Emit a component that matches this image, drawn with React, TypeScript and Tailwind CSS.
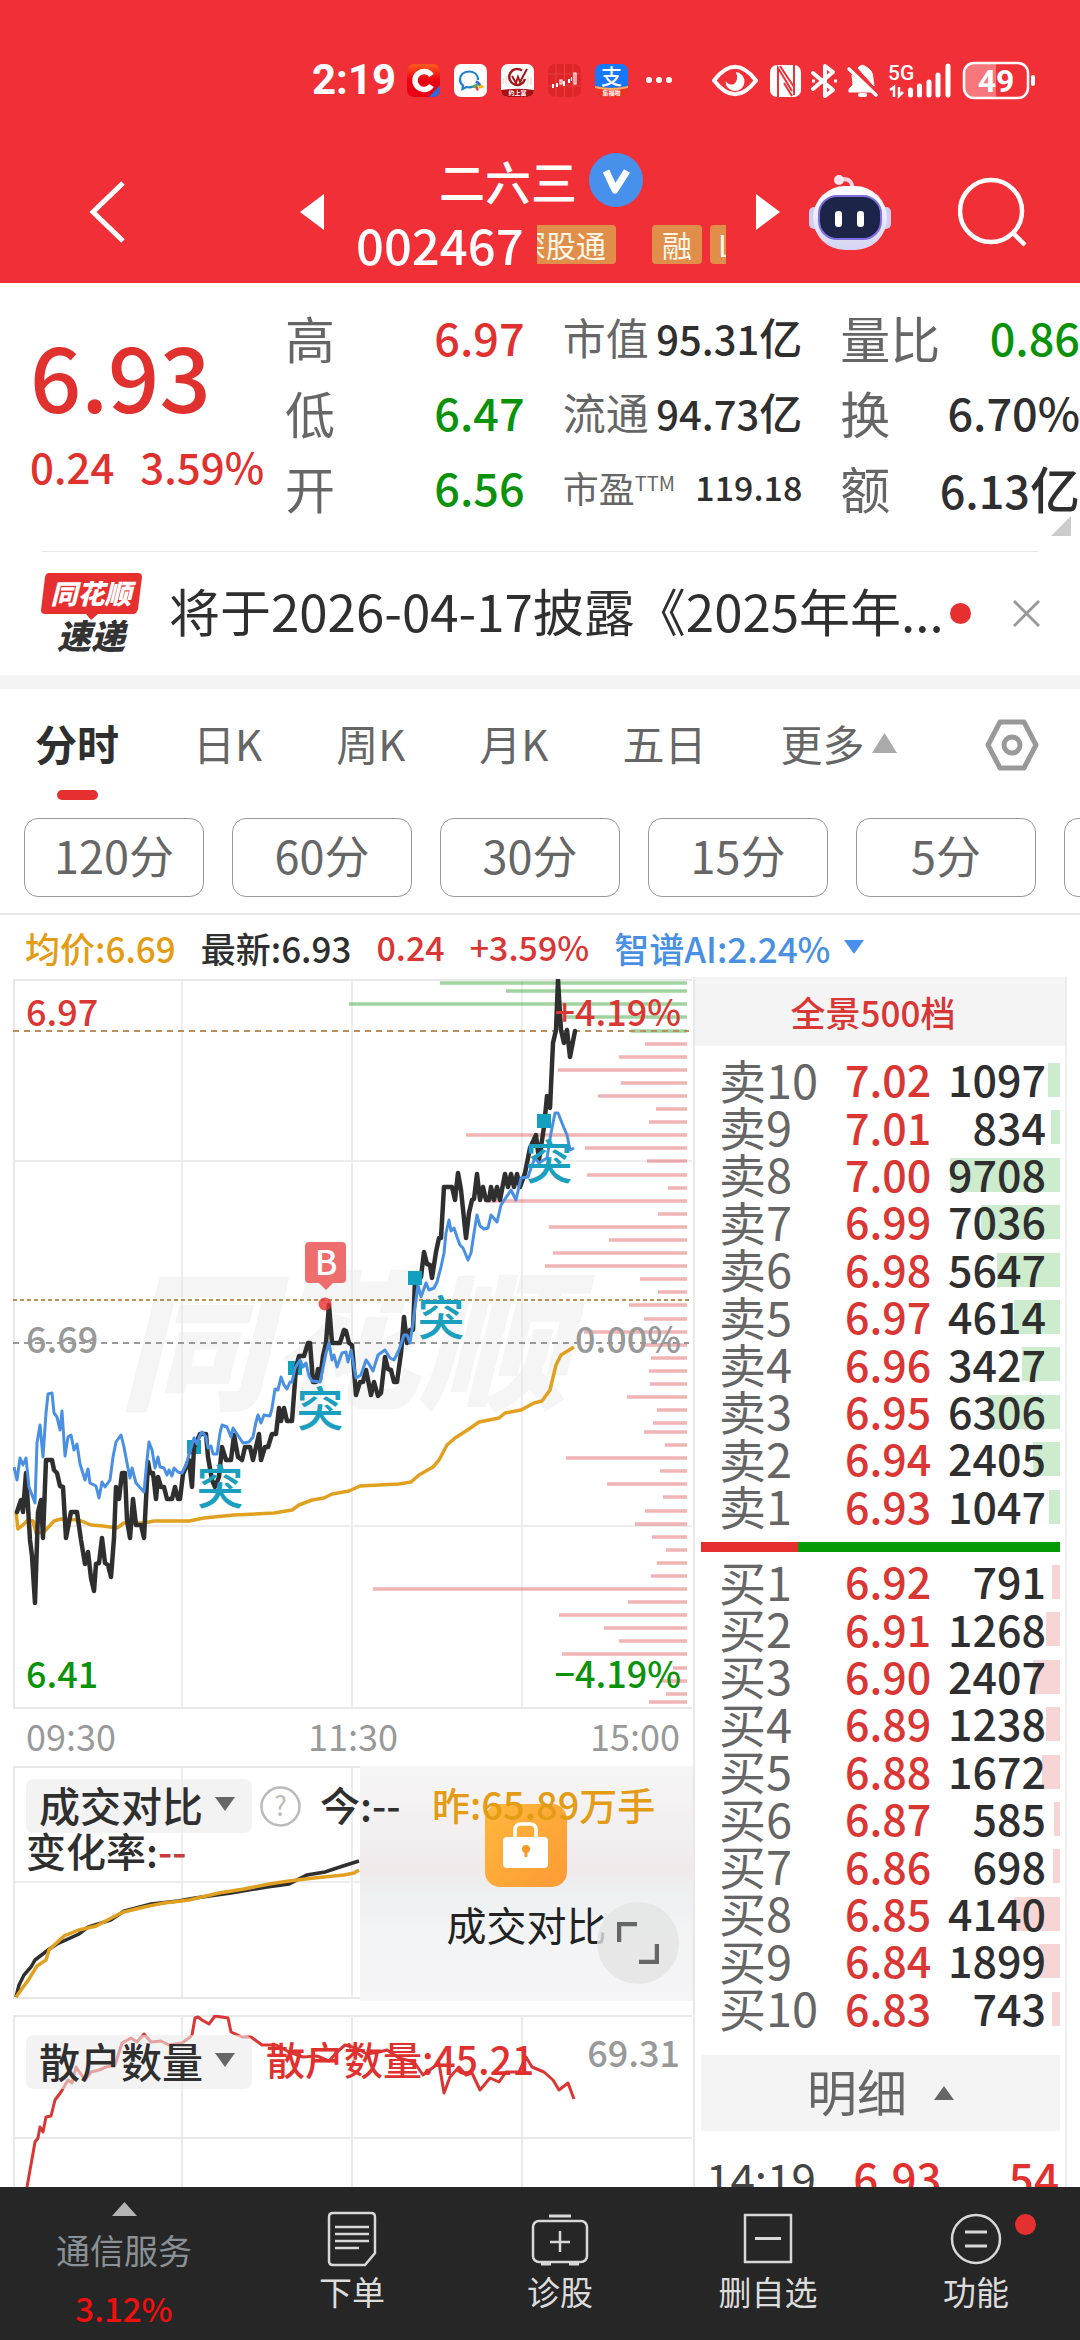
import React from "react";

type Level = { label: string; price: string; volume: string; bar: number };

const sells: Level[] = [
  { label: "卖10", price: "7.02", volume: "1097", bar: 12 },
  { label: "卖9", price: "7.01", volume: "834", bar: 9 },
  { label: "卖8", price: "7.00", volume: "9708", bar: 110 },
  { label: "卖7", price: "6.99", volume: "7036", bar: 79 },
  { label: "卖6", price: "6.98", volume: "5647", bar: 63 },
  { label: "卖5", price: "6.97", volume: "4614", bar: 46 },
  { label: "卖4", price: "6.96", volume: "3427", bar: 38 },
  { label: "卖3", price: "6.95", volume: "6306", bar: 71 },
  { label: "卖2", price: "6.94", volume: "2405", bar: 27 },
  { label: "卖1", price: "6.93", volume: "1047", bar: 11 },
];

const buys: Level[] = [
  { label: "买1", price: "6.92", volume: "791", bar: 8 },
  { label: "买2", price: "6.91", volume: "1268", bar: 14 },
  { label: "买3", price: "6.90", volume: "2407", bar: 27 },
  { label: "买4", price: "6.89", volume: "1238", bar: 14 },
  { label: "买5", price: "6.88", volume: "1672", bar: 18 },
  { label: "买6", price: "6.87", volume: "585", bar: 6 },
  { label: "买7", price: "6.86", volume: "698", bar: 7 },
  { label: "买8", price: "6.85", volume: "4140", bar: 46 },
  { label: "买9", price: "6.84", volume: "1899", bar: 21 },
  { label: "买10", price: "6.83", volume: "743", bar: 8 },
];

const priceLine =
  "18,1512 22,1500 24,1512 27,1473 31,1540 33,1556 36,1603 39,1512 42,1500 44,1538 47,1460 53,1460 55,1470 58,1473 61,1486 64,1487 67,1538 72,1512 78,1512 82,1540 86,1564 89,1552 92,1578 95,1591 97,1564 100,1563 103,1538 106,1563 109,1565 112,1577 115,1538 117,1487 120,1499 123,1473 126,1473 128,1520 131,1538 134,1499 137,1525 142,1525 145,1538 149,1462 151,1473 154,1473 157,1499 159,1477 162,1487 165,1487 168,1499 173,1499 176,1487 179,1499 181,1499 184,1474 190,1460 193,1487 195,1447 201,1434 207,1434 209,1457 213,1480 216,1487 220,1477 223,1447 227,1460 232,1460 235,1435 239,1457 243,1460 246,1447 251,1447 254,1460 260,1434 262,1460 266,1447 269,1447 273,1434 277,1434 280,1408 282,1421 285,1408 288,1421 293,1421 297,1368 300,1356 305,1356 309,1343 311,1343 314,1382 317,1382 319,1369 321,1380 324,1356 327,1343 330,1305 333,1343 341,1343 345,1330 347,1331 350,1343 353,1345 357,1395 361,1382 364,1382 367,1370 372,1395 375,1382 379,1396 382,1393 386,1357 389,1369 392,1370 395,1382 398,1382 402,1353 405,1317 408,1343 411,1330 414,1330 416,1280 422,1277 425,1252 428,1264 431,1265 433,1278 437,1252 440,1238 442,1238 445,1187 453,1187 456,1200 459,1173 462,1190 467,1238 470,1213 473,1200 475,1199 478,1174 481,1200 484,1187 487,1200 490,1200 492,1187 495,1200 498,1187 501,1200 506,1174 509,1187 512,1174 515,1187 518,1174 521,1187 526,1173 531,1148 537,1135 540,1160 545,1127 548,1096 551,1108 554,1043 557,1030 559,980 562,1030 565,1043 568,1030 571,1057 576,1031";

const themeLine =
  "15,1467 18,1480 21,1458 24,1465 27,1458 30,1487 36,1503 38,1443 41,1425 44,1457 47,1413 49,1394 53,1393 55,1413 58,1417 61,1430 63,1411 66,1456 69,1437 72,1435 75,1450 78,1444 81,1464 86,1480 89,1469 91,1483 97,1486 100,1498 103,1482 106,1487 111,1480 114,1457 117,1442 122,1435 125,1447 128,1463 131,1478 133,1468 137,1483 145,1492 148,1460 150,1442 153,1450 156,1468 159,1457 161,1467 165,1468 168,1475 170,1470 173,1476 175,1468 179,1472 183,1473 187,1465 195,1438 198,1444 201,1435 203,1432 207,1437 209,1448 212,1446 214,1454 218,1454 221,1433 223,1425 228,1427 232,1437 234,1428 240,1437 244,1443 250,1442 254,1437 257,1422 259,1415 262,1423 265,1415 271,1416 273,1408 276,1389 279,1390 282,1377 285,1385 288,1389 291,1382 293,1382 296,1368 301,1360 304,1367 307,1363 310,1376 313,1381 321,1382 324,1368 327,1353 330,1343 333,1360 335,1355 338,1367 343,1353 347,1352 349,1362 352,1350 357,1378 362,1375 367,1360 370,1364 374,1371 379,1355 386,1350 391,1358 395,1360 400,1350 405,1335 408,1335 411,1343 414,1323 419,1285 422,1297 427,1283 430,1290 435,1288 438,1282 442,1267 445,1253 447,1233 450,1220 452,1231 455,1228 458,1237 461,1245 464,1248 469,1260 472,1253 475,1233 478,1215 481,1226 485,1229 489,1228 492,1215 498,1222 502,1205 512,1190 517,1200 522,1178 529,1177 532,1168 536,1158 540,1163 548,1158 552,1133 556,1113 559,1113 565,1128 568,1135 571,1150 575,1148";

const averageLine =
  "17,1512 19,1529 24,1525 29,1520 34,1521 37,1533 45,1532 55,1521 62,1519 80,1520 92,1525 104,1526 118,1528 125,1523 145,1523 155,1521 190,1521 205,1518 235,1515 275,1513 293,1510 300,1505 313,1500 325,1498 333,1494 350,1491 361,1486 380,1485 400,1484 412,1482 420,1475 434,1467 440,1460 448,1445 456,1438 470,1429 480,1422 500,1418 506,1413 522,1410 535,1403 543,1401 551,1390 557,1365 562,1355 575,1347";

const volumeToday =
  "17,1997 20,1985 25,1975 32,1967 36,1960 49,1950 58,1944 80,1934 89,1927 112,1920 125,1911 152,1904 179,1901 196,1898 232,1893 268,1887 290,1884 308,1875 326,1872 344,1866 360,1861";

const volumeYesterday =
  "17,1997 30,1979 38,1966 47,1960 50,1950 65,1936 80,1930 97,1926 120,1914 125,1912 145,1907 165,1903 190,1900 220,1893 245,1889 270,1884 290,1881 315,1878 345,1875 355,1873 360,1870";

const retailLine =
  "28,2187 36,2142 39,2138 41,2127 44,2132 47,2117 52,2116 56,2100 62,2092 69,2080 73,2083 77,2067 86,2080 92,2072 100,2070 107,2067 116,2065 123,2043 132,2038 138,2042 145,2034 152,2042 162,2041 170,2045 183,2043 190,2038 193,2035 196,2018 199,2017 203,2020 210,2024 216,2016 229,2018 232,2032 243,2037 252,2037 263,2045 277,2045 290,2052 304,2057 318,2056 330,2061 338,2052 346,2045 357,2048 368,2054 380,2052 388,2050 400,2058 415,2062 424,2075 440,2063 445,2093 451,2077 460,2067 467,2075 473,2073 481,2090 491,2078 500,2082 507,2072 520,2072 527,2057 533,2067 545,2072 554,2080 560,2090 569,2083 575,2099";

const greenBars = [[441, 983], [507, 991], [350, 1004], [567, 1017], [632, 1031]];

const redBars = [
  [646, 1044], [620, 1057], [559, 1070], [622, 1083], [599, 1096], [657, 1109], [650, 1122], [467, 1135],
  [586, 1148], [648, 1161], [588, 1175], [669, 1188], [487, 1201], [659, 1214], [550, 1227], [610, 1240],
  [554, 1253], [546, 1266], [641, 1279], [659, 1292], [630, 1305], [645, 1319], [585, 1332], [645, 1345],
  [652, 1358], [650, 1371], [651, 1384], [628, 1397], [658, 1410], [654, 1423], [645, 1432], [666, 1445],
  [567, 1458], [661, 1471], [608, 1484], [664, 1497], [646, 1511], [636, 1524], [653, 1537], [667, 1550],
  [658, 1563], [652, 1576], [374, 1589], [629, 1602], [560, 1615], [605, 1628], [620, 1641], [563, 1654],
  [674, 1668], [661, 1681], [667, 1694], [650, 1702],
];

const breakouts = [
  { x: 195, y: 1447, tx: 221, ty: 1504 },
  { x: 296, y: 1368, tx: 321, ty: 1426 },
  { x: 416, y: 1278, tx: 442, ty: 1335 },
  { x: 545, y: 1121, tx: 550, ty: 1179 },
];

function StatusBar() {
  return (
    <div className="flex h-[160px] items-center pl-[312px] pr-[44px] text-white">
      <span className="w-[95px] text-[42px] font-bold leading-none font-['Roboto',sans-serif]">2:19</span>
      <div className="flex gap-[14px]">
        <svg className="size-[33px]" viewBox="0 0 33 33" aria-hidden="true">
          <defs>
            <linearGradient id="cg" x1="0" y1="0" x2="0" y2="1">
              <stop offset="0" stopColor="#ff5a1f" />
              <stop offset=".5" stopColor="#e60012" />
            </linearGradient>
          </defs>
          <rect width="33" height="33" rx="7" fill="url(#cg)" />
          <path d="M22 33 L33 21 V26 Q33 33 26 33Z" fill="#2f6be0" />
          <path d="M24.500 11.500 A9 9 0 1 0 24.500 21.500" fill="none" stroke="#fff" strokeWidth="5.500" />
        </svg>
        <svg className="size-[33px]" viewBox="0 0 33 33" aria-hidden="true">
          <rect width="33" height="33" rx="7" fill="#fff" />
          <path d="M24 16 C24 10 19.500 7.500 15 7.500 C9.500 7.500 6 11 6 15.500 C6 18.500 7.500 20.500 9 21.500 L8.500 25 L12.500 23 C15 23.500 17 23.500 19 22.500" fill="none" stroke="#1e7fd6" strokeWidth="2.200" />
          <path d="M23 18 l2.500 2.500" stroke="#2f6be0" strokeWidth="3" strokeLinecap="round" />
          <path d="M20 22.500 l2.500 -1" stroke="#4caf50" strokeWidth="3" strokeLinecap="round" />
          <path d="M23.500 25.500 l-1 -2" stroke="#f44336" strokeWidth="2.500" strokeLinecap="round" />
          <path d="M26 23 l2 -.5" stroke="#ffb300" strokeWidth="3" strokeLinecap="round" />
        </svg>
        <svg className="size-[33px]" viewBox="0 0 33 33" aria-hidden="true">
          <rect width="33" height="33" rx="7" fill="#fff" />
          <path d="M2 20V14M5 21V12M27 20V12M30 21V13" stroke="#f6c9c9" />
          <path d="M21 6.500 A8 8 0 1 0 24 15" fill="none" stroke="#a3181b" strokeWidth="2.500" />
          <path d="M11 12 L15 19 L17 13 L19 18 L26 5" fill="none" stroke="#a3181b" strokeWidth="2" />
          <path d="M0 26 Q16 23.500 33 26 Q33 33 26 33 H7 Q0 33 0 26Z" fill="#a80f12" />
          <text x="16.500" y="31" textAnchor="middle" fontSize="6" fontWeight="700" fill="#fff">约上富</text>
        </svg>
        <svg className="size-[33px]" viewBox="0 0 33 33" aria-hidden="true">
          <rect width="33" height="33" rx="7" fill="#df2528" />
          <path d="M8 0V33M16.500 0V33M25 0V33M0 10H33M0 22H33" stroke="#ea4a4a" strokeWidth=".7" />
          <path d="M5 20v4M9 19v4M16 17v5M21 15v4" stroke="#fff" strokeWidth="2" />
          <path d="M12 16h2v4h-2zM26 9h2v11h-2zM23.500 13v4" fill="none" stroke="#fff" strokeWidth="1.200" />
        </svg>
        <svg className="size-[33px]" viewBox="0 0 33 33" aria-hidden="true">
          <rect width="33" height="33" rx="7" fill="#1677ff" />
          <path d="M0 22 Q16 26 33 22 V26 Q33 33 26 33 H7 Q0 33 0 26Z" fill="#f0321e" />
          <path d="M0 22 Q16 26 33 22 V24 Q16 28 0 24Z" fill="#ffb168" />
          <text x="16.500" y="20" textAnchor="middle" fontSize="21" fontWeight="500" fill="#fff">支</text>
          <text x="16.500" y="31" textAnchor="middle" fontSize="6" fontWeight="700" fill="#fff">集福啦</text>
        </svg>
      </div>
      <svg className="ml-[16px] h-[8px] w-[30px]" viewBox="0 0 30 8" fill="#fff" aria-hidden="true">
        <circle cx="5" cy="4" r="3" />
        <circle cx="15" cy="4" r="3" />
        <circle cx="25" cy="4" r="3" />
      </svg>
      <svg className="ml-auto h-[40px] w-[324px]" viewBox="712 60 324 40" fill="none" stroke="#fff" aria-hidden="true">
        <path d="M714 80.500 Q735 53 756 80.500 Q735 108 714 80.500Z" strokeWidth="4" strokeLinejoin="round" />
        <path d="M736 72 A9.500 9.500 0 1 1 725.500 81 Q729 86 734 84 Q739 80 736 72Z" fill="#fff" stroke="none" />
        <rect x="770" y="65" width="31" height="32" rx="7" fill="#fff" stroke="none" />
        <path d="M778 97 V68 L792 91 M780 66 L794 87 M794 65 V95 M784 83 L792 96" stroke="#f12f37" strokeWidth="2" />
        <path d="M813 73 L833 90 L825 96 V66 L833 72 L813 89" strokeWidth="4" strokeLinejoin="round" strokeLinecap="round" />
        <path d="M812 81h3M834 81h3" strokeWidth="3" />
        <path d="M852 75 L872 92 H849 V89 L853 85Z M858 68 Q862 63 866 67 Q873 70 873 79 L874 86Z" fill="#fff" strokeWidth="1" />
        <path d="M849 69 L876 95" strokeWidth="3.500" strokeLinecap="round" />
        <path d="M860 95h5" strokeWidth="4" strokeLinecap="round" />
        <text x="888" y="80" fontSize="21" fontWeight="500" fill="#fff" stroke="none" className="font-['Roboto',sans-serif]">5G</text>
        <path d="M890 90 L894 87 V97 M899 87 V96 L903 92" strokeWidth="2.500" />
        <path d="M910.500 90V95M919.500 86V95M929 82V95M938 75V95M948 66V95" strokeWidth="5" strokeLinecap="round" />
        <path d="M996 64H975Q965 64 965 74V88Q965 97 975 97H996Z" fill="#fff" fillOpacity=".35" stroke="none" />
        <rect x="964" y="63" width="64" height="35" rx="10" strokeWidth="2.500" />
        <path d="M1033 77V84" strokeWidth="4" strokeLinecap="round" />
        <text x="996" y="92" textAnchor="middle" fontSize="32" fontWeight="700" fill="#fff" stroke="none" className="font-['Roboto',sans-serif]">49</text>
      </svg>
    </div>
  );
}

function Header() {
  return (
    <header className="h-[283px] shrink-0 bg-[#f12f37] text-white">
      <StatusBar />
      <div className="-mt-[8px] flex h-[120px] items-center pl-[88px] pr-[52px]">
        <button type="button" aria-label="返回" className="w-[40px]">
          <svg className="h-[62px] w-[38px]" viewBox="0 0 38 62" fill="none" stroke="#fff" strokeWidth="5">
            <path d="M35 2 L5 31 L35 60" />
          </svg>
        </button>
        <div className="ml-auto mr-[28px] flex items-center">
          <button type="button" aria-label="上一只" className="mr-[32px]">
            <svg className="h-[36px] w-[24px]" viewBox="0 0 24 36"><path d="M24 0V36L0 18Z" fill="#fff" /></svg>
          </button>
          <div className="flex w-[370px] flex-col">
            <h1 className="flex items-center justify-center gap-[12px] text-[46px] font-medium leading-[60px]">
              二六三
              <svg className="size-[54px]" viewBox="0 0 54 54" aria-hidden="true">
                <circle cx="27" cy="27" r="27" fill="#4791ed" />
                <path d="M17 18 L26 37 L38 18" fill="none" stroke="#fff" strokeWidth="7" strokeLinejoin="round" />
              </svg>
            </h1>
            <div className="mt-[4px] flex h-[60px] items-center gap-[13px]">
              <span className="text-[49px] font-medium leading-[60px]">002467</span>
              <div className="flex h-[39px] w-[190px] justify-end overflow-hidden text-[30px] leading-[38px] text-[#fff8e8]">
                <div className="-mr-[33px] flex shrink-0">
                  <span className="mr-[36px] rounded-[4px] bg-[#e28e4b] px-[10px]">深股通</span>
                  <span className="mr-[8px] rounded-[4px] bg-[#e28e4b] px-[10px]">融</span>
                  <span className="rounded-[4px] bg-[#e28e4b] px-[8px]">L1</span>
                </div>
              </div>
            </div>
          </div>
          <button type="button" aria-label="下一只" className="ml-[30px]">
            <svg className="h-[36px] w-[24px]" viewBox="0 0 24 36"><path d="M0 0V36L24 18Z" fill="#fff" /></svg>
          </button>
        </div>
        <button type="button" aria-label="智能助手" className="mr-[66px]">
          <svg className="h-[78px] w-[84px]" viewBox="0 0 84 78">
            <defs>
              <linearGradient id="head" x1="0" y1="0" x2="0" y2="1">
                <stop offset="0" stopColor="#fff" />
                <stop offset="1" stopColor="#d4d4f2" />
              </linearGradient>
            </defs>
            <path d="M44 18 Q46 5 33 6" fill="none" stroke="#f5d5e4" strokeWidth="4" />
            <circle cx="31" cy="7" r="5" fill="#fbe6ee" />
            <rect x="1" y="34" width="12" height="22" rx="5" fill="#cfcdf0" />
            <rect x="71" y="34" width="12" height="22" rx="5" fill="#cfcdf0" />
            <rect x="5" y="13" width="74" height="64" rx="32" fill="url(#head)" />
            <rect x="11" y="23" width="62" height="43" rx="18" fill="#1c2547" stroke="#7f6fe0" strokeWidth="2" />
            <rect x="27" y="38" width="7" height="16" rx="3" fill="#fff" />
            <rect x="49" y="38" width="7" height="16" rx="3" fill="#fff" />
          </svg>
        </button>
        <button type="button" aria-label="搜索">
          <svg className="h-[70px] w-[70px]" viewBox="0 0 70 70" fill="none" stroke="#fff" strokeWidth="4.500">
            <circle cx="33" cy="34" r="31" />
            <path d="M55 56 L67 68" />
          </svg>
        </button>
      </div>
    </header>
  );
}

type StatProps = {
  label: React.ReactNode;
  value: string;
  unit?: string;
  tone: string;
  labelSize: string;
  valueSize: string;
};

function Stat({ label, value, unit, tone, labelSize, valueSize }: StatProps) {
  return (
    <div className="flex h-[75px] items-center justify-between whitespace-nowrap">
      <dt className={labelSize + " text-[#666]"}>{label}</dt>
      <dd className={valueSize + " font-medium " + tone}>
        {value}
        {unit && <span className={labelSize}>{unit}</span>}
      </dd>
    </div>
  );
}

function Quote() {
  const red = "text-[#e0312f]";
  const green = "text-[#0a930a]";
  const dark = "text-[#2f2f2f]";
  return (
    <section className="relative grid h-[268px] shrink-0 grid-cols-[217px_1fr_1fr_1fr] gap-x-[38px] pl-[30px] pt-[16px] leading-none">
      <div className={"flex flex-col whitespace-nowrap font-medium " + red}>
        <strong className="mt-[30px] text-[90px] font-medium">6.93</strong>
        <span className="mt-[26px] text-[42px]">
          0.24<span className="ml-[26px]">3.59%</span>
        </span>
      </div>
      <dl>
        <Stat label="高" value="6.97" tone={red} labelSize="text-[50px]" valueSize="text-[45px]" />
        <Stat label="低" value="6.47" tone={green} labelSize="text-[50px]" valueSize="text-[45px]" />
        <Stat label="开" value="6.56" tone={green} labelSize="text-[50px]" valueSize="text-[45px]" />
      </dl>
      <dl>
        <Stat label="市值" value="95.31" unit="亿" tone={dark} labelSize="text-[43px]" valueSize="text-[40px]" />
        <Stat label="流通" value="94.73" unit="亿" tone={dark} labelSize="text-[43px]" valueSize="text-[40px]" />
        <Stat
          label={<>市盈<span className="align-[12px] text-[20px]">TTM</span></>}
          value="119.18"
          tone={dark}
          labelSize="text-[36px]"
          valueSize="text-[34px]"
        />
      </dl>
      <dl>
        <Stat label="量比" value="0.86" tone={green} labelSize="text-[50px]" valueSize="text-[45px]" />
        <Stat label="换" value="6.70%" tone={dark} labelSize="text-[50px]" valueSize="text-[45px]" />
        <Stat label="额" value="6.13" unit="亿" tone={dark} labelSize="text-[50px]" valueSize="text-[45px]" />
      </dl>
      <svg className="absolute bottom-[15px] right-[9px] size-[20px]" viewBox="0 0 20 20" aria-hidden="true">
        <path d="M20 0V20H0Z" fill="#ccc" />
      </svg>
    </section>
  );
}

function News() {
  return (
    <section className="flex h-[123px] shrink-0 items-center pl-[41px] pr-[40px]">
      <svg className="-mt-[2px] h-[82px] w-[102px]" viewBox="0 0 102 82" role="img" aria-label="同花顺速递">
        <path d="M8 1 H97 Q101 1 101 5 L97 37 Q96 42 92 42 H57 L50 48 L45 42 H4 Q0 42 0 38 L4 5 Q5 1 8 1Z" fill="#e63030" />
        <text x="50" y="32" textAnchor="middle" fontSize="27" fontWeight="900" fontStyle="italic" fill="#fff">同花顺</text>
        <text x="50" y="77" textAnchor="middle" fontSize="34" fontWeight="900" fontStyle="italic" fill="#333">速递</text>
      </svg>
      <a href="#news" className="ml-[26px] whitespace-nowrap pb-[8px] text-[51px] leading-[60px] text-[#2f2f2f]">
        将于2026-04-17披露《2025年年...
      </a>
      <span className="ml-auto size-[21px] shrink-0 rounded-full bg-[#e63030]" />
      <button type="button" aria-label="关闭" className="ml-[42px] shrink-0">
        <svg className="size-[27px]" viewBox="0 0 27 27" stroke="#999" strokeWidth="3"><path d="M1 1L26 26M26 1L1 26" /></svg>
      </button>
    </section>
  );
}

const tabs = ["日K", "周K", "月K", "五日"];
const periods = ["120分", "60分", "30分", "15分", "5分", "1分"];

function Tabs() {
  return (
    <>
      <nav className="flex h-[129px] shrink-0 items-start gap-[74px] pl-[35px] pr-[41px] pt-[24px] text-[42px] leading-[60px] text-[#666]">
        <button type="button" className="flex flex-col items-center font-bold text-[#2f2f2f]">
          分时
          <span className="mt-[17px] h-[10px] w-[41px] rounded-full bg-[#e63030]" />
        </button>
        {tabs.map((t) => (
          <button type="button" key={t}>{t}</button>
        ))}
        <button type="button" className="flex items-center gap-[8px]">
          更多
          <svg className="h-[20px] w-[25px]" viewBox="0 0 25 20"><path d="M12.500 0 L25 20H0Z" fill="#aaa" /></svg>
        </button>
        <button type="button" aria-label="设置" className="ml-auto mt-[6px]">
          <svg className="h-[52px] w-[54px]" viewBox="0 0 54 52" fill="none" stroke="#999" strokeWidth="5" strokeLinejoin="round">
            <path d="M15 3H39L51 26L39 49H15L3 26Z" />
            <circle cx="27" cy="26" r="8" />
          </svg>
        </button>
      </nav>
      <div className="flex h-[97px] shrink-0 gap-[28px] overflow-hidden border-b-2 border-[#e8e8e8] pl-[24px]">
        {periods.map((p) => (
          <button type="button" key={p} className="h-[79px] w-[180px] shrink-0 rounded-[14px] border border-[#999] pb-[6px] text-[45px] leading-none text-[#666]">
            {p}
          </button>
        ))}
      </div>
    </>
  );
}

function Legend() {
  return (
    <div className="flex h-[62px] shrink-0 items-center gap-[25px] whitespace-nowrap pl-[25px] pt-[2px] text-[35px] font-medium leading-none">
      <span className="text-[#e39c13]">均价:6.69</span>
      <span className="text-[#2f2f2f]">最新:6.93</span>
      <span className="text-[34px] text-[#d93634]">0.24</span>
      <span className="text-[34px] text-[#d93634]">+3.59%</span>
      <button type="button" className="flex items-center gap-[14px] text-[#4a90e2]">
        智谱AI:2.24%
        <svg className="h-[14px] w-[20px]" viewBox="0 0 20 14"><path d="M0 0H20L10 14Z" fill="#4791ed" /></svg>
      </button>
    </div>
  );
}

function PriceChart() {
  return (
    <div className="relative text-[36px] font-medium leading-[44px]">
      <svg className="block h-[730px] w-full" viewBox="14 979 680 730" preserveAspectRatio="none" fill="none" role="img" aria-label="分时走势图">
        <text x="345" y="1398" textAnchor="middle" fontSize="150" fontWeight="900" fontStyle="italic" fill="#f5f5f5">同花顺</text>
        <path d="M183 979V1708M353 979V1708M523 979V1708M14 1161H693M14 1526H693" stroke="#e8e8e8" strokeWidth="1.500" />
        <path d="M14 980H693M15 979V1708M14 1708H693" stroke="#e8e8e8" strokeWidth="2" />
        {greenBars.map(([x, y]) => (
          <path key={y} d={`M${x} ${y}H688`} stroke="#2f9e2f" strokeOpacity=".45" strokeWidth="3.500" />
        ))}
        {redBars.map(([x, y]) => (
          <path key={y} d={`M${x} ${y}H688`} stroke="#d83a3a" strokeOpacity=".38" strokeWidth="3.500" />
        ))}
        <path d="M14 1031H690" stroke="#b98f5c" strokeWidth="2" strokeDasharray="6 5" />
        <path d="M14 1300H690" stroke="#b98f5c" strokeWidth="2" strokeDasharray="4 3" />
        <path d="M14 1343H690" stroke="#999" strokeWidth="2" strokeDasharray="6 5" />
        {breakouts.map((b) => (
          <rect key={b.x} x={b.x - 7} y={b.y - 7} width="14" height="14" fill="#13a0be" />
        ))}
        <polyline points={averageLine} stroke="#e0a020" strokeWidth="3.500" strokeLinejoin="round" />
        <polyline points={priceLine} stroke="#2f2f2f" strokeWidth="4.500" strokeLinejoin="round" strokeLinecap="round" />
        <polyline points={themeLine} stroke="#4a90e2" strokeWidth="3" strokeLinejoin="round" />
        <rect x="538" y="1114" width="14" height="14" fill="#13a0be" />
        <rect x="409" y="1271" width="14" height="14" fill="#13a0be" />
        {breakouts.map((b) => (
          <text key={b.x} x={b.tx} y={b.ty} textAnchor="middle" fontSize="47" fontWeight="500" fill="#1a9fbe">突</text>
        ))}
        <path d="M310 1242H343Q347 1242 347 1246V1279Q347 1283 343 1283H334L327 1290L320 1283H310Q306 1283 306 1279V1246Q306 1242 310 1242Z" fill="#ee6d6d" />
        <text x="327" y="1275" textAnchor="middle" fontSize="34" fill="#fff">B</text>
        <circle cx="326" cy="1304" r="6.500" fill="#e63030" fillOpacity=".8" />
      </svg>
      <span className="absolute left-[13px] top-[9px] text-[#d93634]">6.97</span>
      <span className="absolute right-[12px] top-[9px] text-[#d93634]">+4.19%</span>
      <span className="absolute left-[13px] top-[336px] text-[#999]">6.69</span>
      <span className="absolute right-[12px] top-[336px] text-[#999]">0.00%</span>
      <span className="absolute bottom-[15px] left-[13px] text-[#0a930a]">6.41</span>
      <span className="absolute bottom-[15px] right-[12px] text-[#0a930a]">−4.19%</span>
    </div>
  );
}

function ChipButton({ children }: { children: string }) {
  return (
    <button type="button" className="flex h-[54px] w-[226px] items-center gap-[12px] rounded-[8px] bg-[#ebebeb]/60 pb-[4px] pl-[13px] text-[41px] text-[#2f2f2f]">
      {children}
      <svg className="h-[14px] w-[20px]" viewBox="0 0 20 14"><path d="M0 0H20L10 14Z" fill="#666" /></svg>
    </button>
  );
}

function VolumeCompare() {
  return (
    <div className="relative h-[235px] text-[40px] font-medium leading-[46px]">
      <svg className="absolute inset-0 h-[235px] w-full" viewBox="14 1766 680 235" preserveAspectRatio="none" fill="none" role="img" aria-label="成交对比走势">
        <path d="M183 1766V1999M353 1766V1999M14 1882H693" stroke="#e8e8e8" strokeWidth="1.500" />
        <path d="M14 1767H693M15 1766V1999M14 1998H693" stroke="#e8e8e8" strokeWidth="2" />
        <polyline points={volumeToday} stroke="#2f2f2f" strokeWidth="3.500" />
        <polyline points={volumeYesterday} stroke="#e0a020" strokeWidth="3.500" />
      </svg>
      <div className="absolute inset-y-0 right-0 flex w-[49%] flex-col items-center bg-[linear-gradient(to_bottom,#f6f6f6,#f3eef0_30%,#f0eaeb_45%,#edf1f2_55%,#f3f4f6_75%,#f5f4f6)] pt-[38px]">
        <svg className="h-[83px] w-[82px]" viewBox="0 0 82 83" aria-hidden="true">
          <defs>
            <linearGradient id="lock" x1="0" y1="0" x2="1" y2="1">
              <stop offset="0" stopColor="#ffb83c" />
              <stop offset="1" stopColor="#fd9a35" />
            </linearGradient>
          </defs>
          <rect width="82" height="83" rx="15" fill="url(#lock)" />
          <path d="M30 36V26Q30 20 36 20H45Q51 20 51 26V36" fill="none" stroke="#fff" strokeWidth="3.500" />
          <rect x="18" y="33" width="45" height="31" rx="4" fill="#fff" />
          <circle cx="41" cy="45" r="4" fill="#f79a2a" />
          <path d="M41 46V53" stroke="#f79a2a" strokeWidth="3" />
        </svg>
        <span className="mt-[14px] font-normal text-[#222]">成交对比</span>
      </div>
      <button type="button" aria-label="全屏" className="absolute bottom-[17px] right-[14px] flex size-[82px] items-center justify-center rounded-full bg-[#e4e4e4]/80">
        <svg className="size-[42px]" viewBox="0 0 42 42" fill="none" stroke="#666" strokeWidth="4.500"><path d="M2 20V2H20M40 22V40H22" /></svg>
      </button>
      <div className="relative flex items-center whitespace-nowrap pl-[13px] pt-[13px]">
        <ChipButton>成交对比</ChipButton>
        <svg className="ml-[8px] mr-[19px] size-[41px] shrink-0" viewBox="0 0 41 41" fill="none" aria-hidden="true">
          <circle cx="20.500" cy="20.500" r="19" stroke="#bbb" strokeWidth="2.500" />
          <text x="20.500" y="30" textAnchor="middle" fontSize="27" fontWeight="400" fill="#bbb">?</text>
        </svg>
        <span className="w-[112px] pb-[4px] text-[#2f2f2f]">今:--</span>
        <span className="pb-[4px] text-[38px] text-[#e39c13]">昨:65.89万手</span>
      </div>
      <p className="relative -mt-[6px] pl-[13px] text-[#2f2f2f]">
        变化率:<span className="text-[#c93a3a]">--</span>
      </p>
    </div>
  );
}

function RetailCount() {
  return (
    <div className="relative mt-[14px] h-[246px] text-[40px] font-medium leading-[46px]">
      <svg className="absolute inset-0 h-[246px] w-full" viewBox="14 2015 680 246" preserveAspectRatio="none" fill="none" role="img" aria-label="散户数量走势">
        <path d="M183 2015V2261M353 2015V2261M523 2015V2261M14 2138H693" stroke="#e4e4e4" strokeWidth="1.500" />
        <path d="M14 2016H693M15 2015V2261" stroke="#e8e8e8" strokeWidth="2" />
        <polyline points={retailLine} stroke="#d93634" strokeWidth="3" strokeLinejoin="round" />
      </svg>
      <div className="relative flex items-center whitespace-nowrap pl-[13px] pt-[13px]">
        <ChipButton>散户数量</ChipButton>
        <span className="ml-[14px] pb-[8px] text-[39px] text-[#e0312f]">散户数量:45.21</span>
        <span className="ml-auto mr-[13px] pb-[22px] text-[36px] font-medium text-[#999]">69.31</span>
      </div>
    </div>
  );
}

function Depth({ rows, barClass, caption }: { rows: Level[]; barClass: string; caption: string }) {
  return (
    <table className="h-[474px] w-full border-collapse leading-none" aria-label={caption}>
      <tbody>
        {rows.map((r) => (
          <tr key={r.label}>
            <th scope="row" className="w-[126px] p-0 text-left text-[47px] font-normal leading-[44px] text-[#666]">{r.label}</th>
            <td className="p-0 text-[43px] font-medium text-[#d93634]">{r.price}</td>
            <td className="relative p-0 pr-[14px] text-right text-[43px] font-medium text-[#2f2f2f]">
              <span className={"absolute right-0 top-[8px] h-[34px] " + barClass} style={{ width: r.bar }} />
              <span className="relative">{r.volume}</span>
            </td>
          </tr>
        ))}
      </tbody>
    </table>
  );
}

function OrderBook() {
  return (
    <aside className="flex w-[372px] shrink-0 flex-col border-r-2 border-[#eee]">
      <button type="button" className="h-[69px] w-full bg-[#f4f4f4] pr-[14px] text-[35px] font-medium leading-none text-[#d93634]">
        全景500档
      </button>
      <div className="flex flex-col pl-[6px] pr-[5px]">
        <div className="mt-[9px] pl-[18px]">
          <Depth rows={sells} barClass="bg-[#cdebcd]" caption="卖盘" />
        </div>
        <div className="mt-[13px] flex h-[10px]">
          <span className="w-[27%] bg-[#e63030]" />
          <span className="flex-1 bg-[#049a04]" />
        </div>
        <div className="mt-[5px] pl-[18px]">
          <Depth rows={buys} barClass="bg-[#f8d5d5]" caption="买盘" />
        </div>
        <button type="button" className="mt-[24px] flex h-[76px] items-center justify-center gap-[27px] bg-[#f4f4f4] text-[50px] leading-none text-[#666]">
          <span className="pb-[6px]">明细</span>
          <svg className="h-[14px] w-[20px]" viewBox="0 0 20 14"><path d="M0 14H20L10 0Z" fill="#666" /></svg>
        </button>
        <div className="mt-[24px] flex items-center justify-between pl-[5px] pr-px text-[44px] font-medium leading-none text-[#e0312f]">
          <span className="font-normal text-[#444]">14:19</span>
          <span>6.93</span>
          <span className="pl-[30px]">54</span>
        </div>
      </div>
    </aside>
  );
}

function BottomItem({ label, children, badge }: { label: string; children: React.ReactNode; badge?: boolean }) {
  return (
    <button type="button" className="flex flex-1 flex-col items-center pt-[24px] text-[33px] leading-[44px] text-[#dcdcdc]">
      <span className="relative">
        <svg className="h-[56px] w-[60px]" viewBox="0 0 60 56" fill="none" stroke="#d8d8d8" strokeWidth="2.500">{children}</svg>
        {badge && <span className="absolute -right-[30px] top-[3px] size-[21px] rounded-full bg-[#e63030]" />}
      </span>
      <span className="mt-[2px]">{label}</span>
    </button>
  );
}

function BottomBar() {
  return (
    <nav className="flex h-[153px] shrink-0 bg-[#262626]">
      <button type="button" className="flex w-[248px] flex-col items-center pt-[15px] leading-[44px]">
        <svg className="h-[14px] w-[25px]" viewBox="0 0 25 14"><path d="M0 14H25L12.500 0Z" fill="#b4b4b4" /></svg>
        <span className="mt-[12px] text-[34px] text-[#8a9196]">通信服务</span>
        <span className="mt-[14px] text-[33px] font-medium text-[#f01010]">3.12%</span>
      </button>
      <BottomItem label="下单">
        <path d="M11 2H49Q53 2 53 6V42L43 54H11Q7 54 7 50V6Q7 2 11 2Z" />
        <path d="M13 16H47M13 23H47M13 30H47M13 37H37" />
      </BottomItem>
      <BottomItem label="诊股">
        <rect x="3" y="10" width="54" height="41" rx="6" />
        <path d="M19 5H41M11 53H21M39 53H49" strokeWidth="3" />
        <path d="M30 20V41M20 31H40" />
      </BottomItem>
      <BottomItem label="删自选">
        <path d="M7 4H53V51H7Z" />
        <path d="M17 27.500H43" strokeWidth="3" />
      </BottomItem>
      <BottomItem label="功能" badge>
        <circle cx="30" cy="28" r="24" />
        <path d="M19 21H41M19 35H41" strokeWidth="3" />
      </BottomItem>
    </nav>
  );
}

export default function App() {
  return (
    <div className="flex h-screen flex-col overflow-hidden bg-white font-['Noto_Sans_CJK_SC','Roboto',sans-serif]">
      <Header />
      <main className="flex min-h-0 flex-1 flex-col overflow-hidden">
        <Quote />
        <hr className="mx-[41px] border-t border-[#e8e8e8]" />
        <News />
        <div className="h-[14px] shrink-0 bg-[#f4f4f4]" />
        <Tabs />
        <Legend />
        <div className="flex pr-[13px]">
          <div className="min-w-0 flex-1 border-r-2 border-[#e8e8e8] pl-[13px] pt-[2px]">
            <PriceChart />
            <div className="flex h-[57px] items-center justify-between pb-[6px] pl-[13px] pr-[13px] text-[36px] leading-none text-[#999]">
              <span>09:30</span>
              <span>11:30</span>
              <span>15:00</span>
            </div>
            <VolumeCompare />
            <RetailCount />
          </div>
          <OrderBook />
        </div>
      </main>
      <BottomBar />
    </div>
  );
}
